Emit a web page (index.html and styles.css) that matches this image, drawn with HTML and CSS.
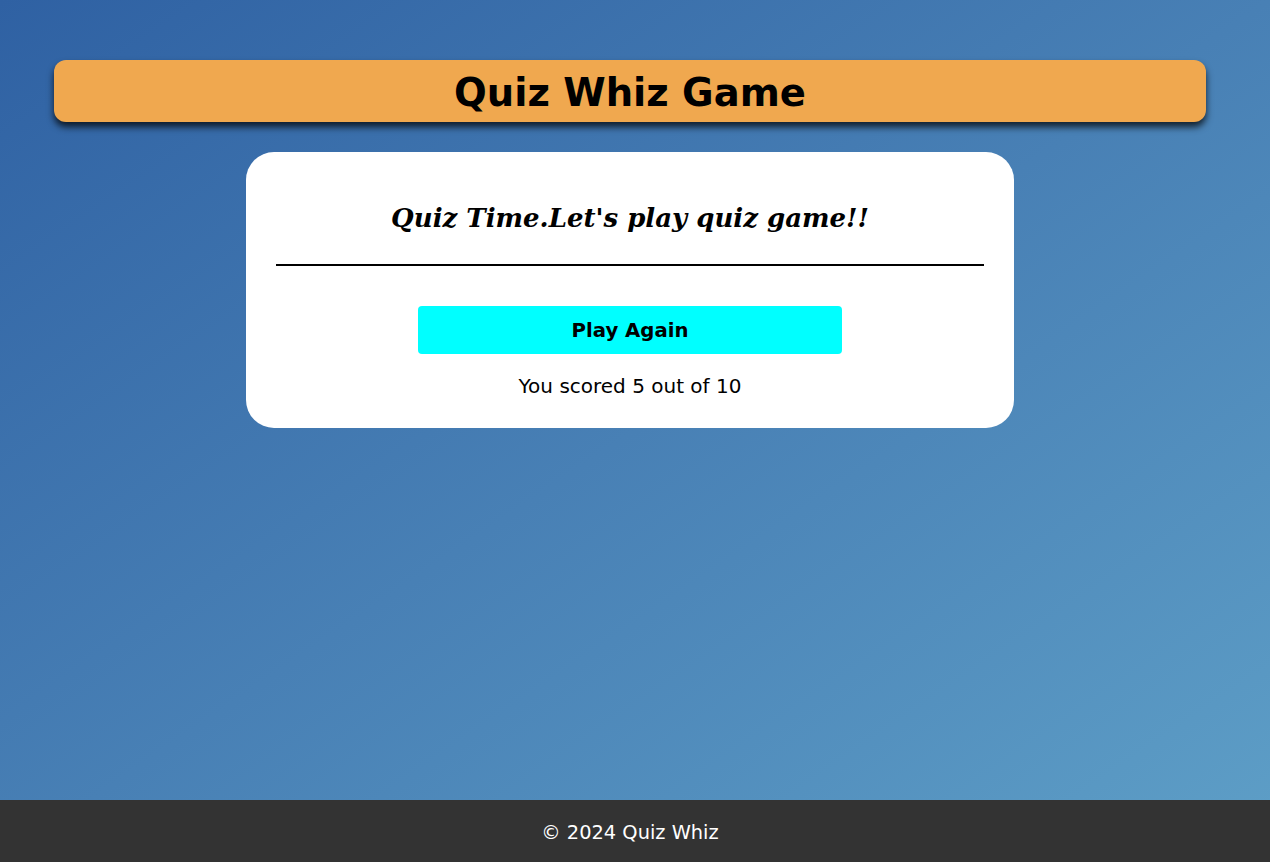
FILE: index.html
```html
<!DOCTYPE html>
<html lang="en">
<head>
<meta charset="utf-8">
<title>Quiz Whiz Game</title>
<link rel="stylesheet" href="styles.css">
</head>
<body>
<main class="page">
  <header class="banner"><h1 class="banner-title">Quiz Whiz Game</h1></header>
  <section class="card">
    <h2 class="card-title">Quiz Time.Let's play quiz game!!</h2>
    <hr class="divider">
    <button class="play-btn" type="button">Play Again</button>
    <p class="score">You scored 5 out of 10</p>
  </section>
</main>
<footer class="footer">© 2024 Quiz Whiz</footer>
</body>
</html>
```
FILE: styles.css
```css
html, body {
  margin: 0;
  padding: 0;
  height: 100%;
}
body {
  display: flex;
  flex-direction: column;
  font-family: "DejaVu Sans", Verdana, sans-serif;
  background: linear-gradient(to bottom right, #2f61a3 0%, #4880b5 50%, #5e9fc7 100%);
}
.page {
  flex: 1;
  display: flex;
  flex-direction: column;
  align-items: center;
  padding-top: 60px;
  padding-right: 10px;
}
.banner {
  width: 1152px;
  height: 62px;
  padding-top: 3px;
  background: #f0a84f;
  border-radius: 12px;
  box-shadow: 0 5px 7px rgba(0, 0, 0, 0.75);
  display: flex;
  align-items: center;
  justify-content: center;
  box-sizing: border-box;
}
.banner-title {
  margin: 0;
  font-size: 38.5px;
  font-weight: bold;
  color: #000;
}
.card {
  margin-top: 30px;
  width: 768px;
  box-sizing: border-box;
  background: #fff;
  border-radius: 28px;
  padding: 44px 30px 30px;
  display: flex;
  flex-direction: column;
  align-items: center;
}
.card-title {
  margin: 0;
  font-family: Georgia, "DejaVu Serif", serif;
  font-style: italic;
  font-weight: bold;
  font-size: 26px;
  line-height: 44px;
}
.divider {
  width: 100%;
  margin: 24px 0 0;
  border: none;
  border-top: 2px solid #000;
}
.play-btn {
  margin-top: 40px;
  width: 424px;
  height: 48px;
  background: #00ffff;
  border: none;
  border-radius: 4px;
  font-family: "DejaVu Sans", Verdana, sans-serif;
  font-weight: bold;
  font-size: 19.7px;
  color: #000;
}
.score {
  margin: 20px 0 0;
  font-size: 20px;
  line-height: 24px;
  color: #000;
}
.footer {
  height: 62px;
  padding-top: 2px;
  box-sizing: border-box;
  background: #333;
  color: #fff;
  font-size: 19.4px;
  padding-right: 10px;
  display: flex;
  align-items: center;
  justify-content: center;
}
```
